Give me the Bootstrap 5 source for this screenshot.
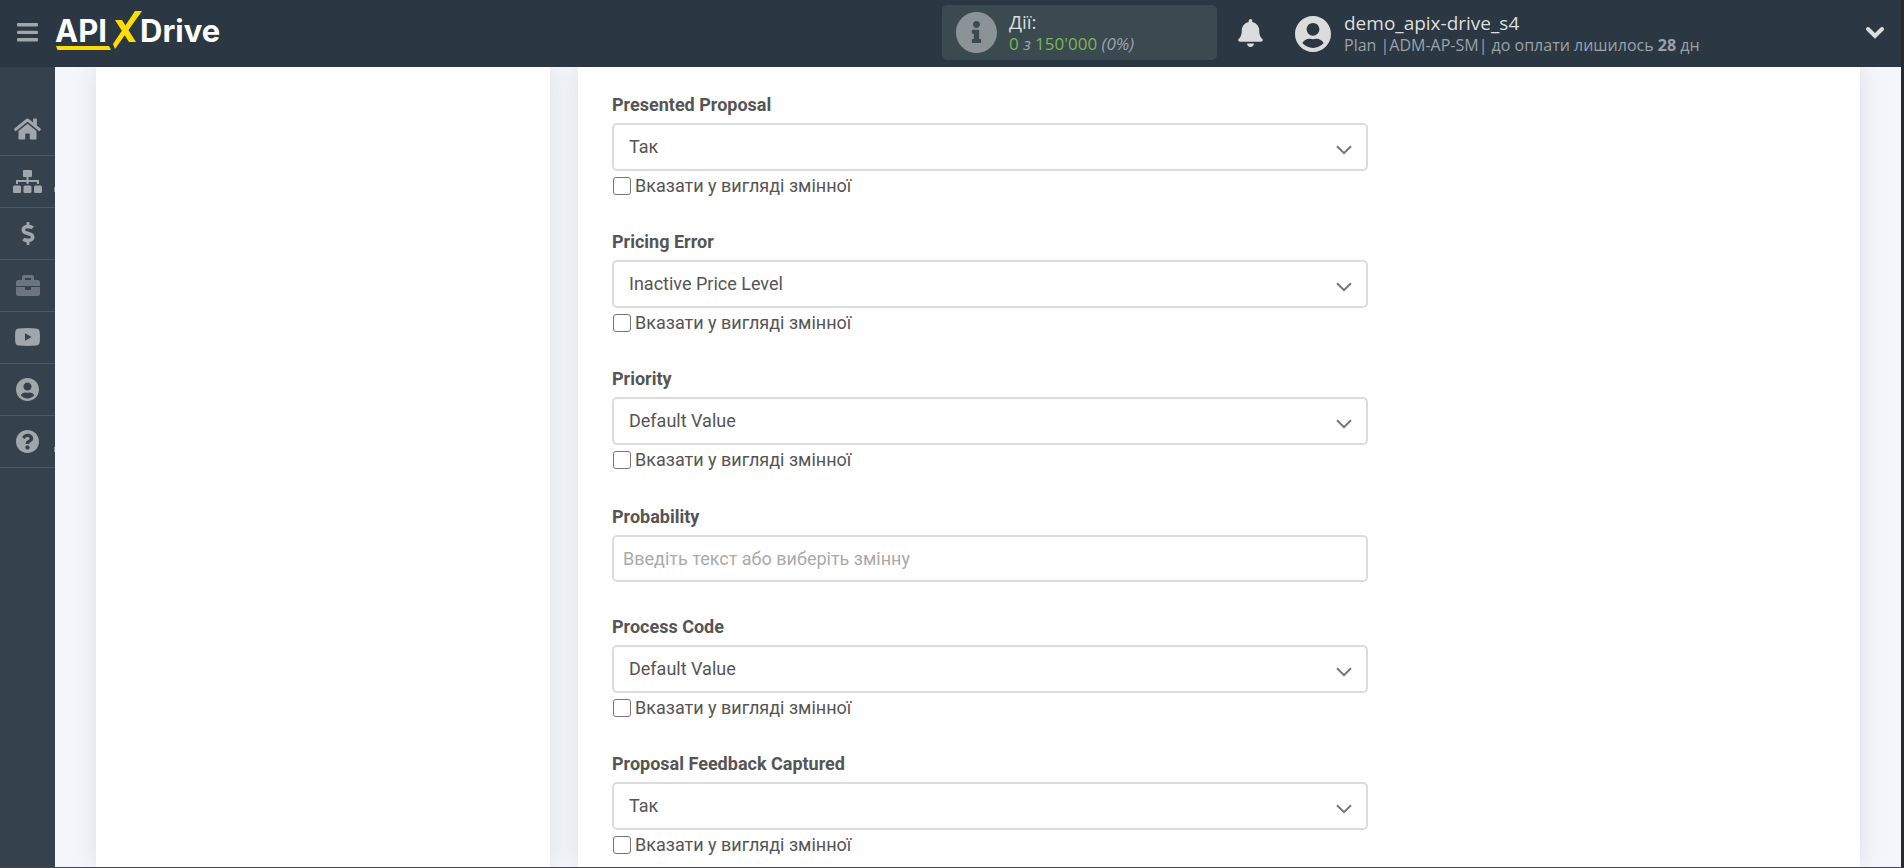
<!DOCTYPE html>
<html lang="uk">
<head>
<meta charset="utf-8">
<meta name="viewport" content="width=device-width, initial-scale=1">
<title>ApiX-Drive</title>
<link href="https://cdn.jsdelivr.net/npm/bootstrap@5.3.0/dist/css/bootstrap.min.css" rel="stylesheet">
<style>
  body { font-family: Roboto, "Noto Sans", sans-serif; font-size: 18px; line-height: 24px; color: #555; background: #f3f7fc; }
  .app-frame { border-right: 3px solid #272a2d; border-bottom: 1px solid #444; }
  .topbar { height: 67px; padding-bottom: 2px; background: #2b3742; font-family: "Open Sans", "Noto Sans", sans-serif; z-index: 2; }
  .icon-btn { background: none; border: 0; padding: 0; line-height: 0; }
  .burger { width: 55px; color: #a1a6ab; }
  .logo { color: #fff; text-decoration: none; }
  .logo text { font: 700 31px Inter, sans-serif; fill: #fff; }
  .actions-box { width: 275px; height: 55px; background: #3b4950; border-radius: 5px; padding-left: 14px; gap: 12px; color: #8b9397; }
  .line-a { font-size: 19px; line-height: 22px; color: #dedede; }
  .line-b { font-size: 17px; line-height: 22px; color: #9ba2a8; }
  .green { color: #7cb651; }
  .light-icon { color: #dcdcdc; }
  .bell-btn { margin-left: 21px; margin-right: 32px; }
  .user-box { width: 570px; gap: 13px; padding-top: 2px; text-decoration: none; }
  .user-box .line-b { font-size: 16px; }
  .sidebar { width: 55px; background: #36414e; padding-top: 37px; flex: none; }
  .side-link { height: 52px; padding-bottom: 1px; border-bottom: 1px solid #4c5864; color: #a1a6ab; }
  .side-link.off { color: #6c7480; }
  .side-link.more::after { content: ""; position: absolute; right: 0; top: 31px; width: 1px; height: 5px; background: #88919a; }
  .content-row { padding: 0 41px; gap: 28px; }
  .panel { background: #fff; box-shadow: 0 0 24px rgba(0, 0, 0, .1); }
  .panel-side { flex: 0 0 454px; }
  .panel-main { padding: 26px 34px 0; }
  .fields { max-width: 756px; }
  .field + .field { margin-top: 30px; }
  .field + .field-text { margin-top: 31px; }
  .field-text + .field { margin-top: 33px; }
  .field-title { font-weight: 700; margin-bottom: 6px; display: block; }
  .field .form-control, .field .form-select { height: 48px; font-size: 18px; line-height: 24px; color: #555; border: 2px solid #dcdcdc; border-radius: 5px; background-color: #fff; }
  .field .form-select { padding: 10px 40px 10px 15px; background-size: 16px 10px; background-position: right 14px top 20px;
    background-image: url("data:image/svg+xml,%3Csvg xmlns='http://www.w3.org/2000/svg' viewBox='0 0 16 10'%3E%3Cpath d='M1 1.2l7 7 7-7' fill='none' stroke='%23777' stroke-width='2'/%3E%3C/svg%3E"); }
  .field .form-control { height: 47px; padding: 9px 9px 10px; }
  .field .form-control::placeholder { color: #aaa; }
  .check-row { height: 29px; padding-top: 1px; gap: 4px; }
  .check-row .form-check-input { width: 18px; height: 18px; margin: 0 0 0 1px; border: 1px solid #767676; border-radius: 3px; }
</style>
</head>
<body>
<div class="app-frame d-flex flex-column min-vh-100">
  <header class="topbar d-flex align-items-center">
    <button class="icon-btn burger d-flex justify-content-center" type="button" aria-label="Меню">
      <svg width="21" height="19" viewBox="0 0 21 19" fill="currentColor"><rect y="0" width="21" height="3.500" rx="1"/><rect y="7.700" width="21" height="3.300" rx="1"/><rect y="15" width="21" height="3.500" rx="1"/></svg>
    </button>
    <a class="logo" href="#" aria-label="APIXDrive">
      <svg class="d-block" width="170" height="44" viewBox="0 0 170 44">
        <text x="0" y="31">API</text>
        <text x="85" y="31">Drive</text>
        <path d="M1 35h53l2 4H2.500z" fill="#ffdc04"/>
        <path d="M60 9h7l14 22h-7z" fill="#ffdc04"/>
        <path d="M80 0h7L60 38l-2-5z" fill="#ffdc04"/>
      </svg>
    </a>
    <div class="actions-box ms-auto d-flex align-items-center">
      <svg width="41" height="41" viewBox="8 8 496 496" fill="currentColor"><path d="M256 8C119.043 8 8 119.083 8 256c0 136.997 111.043 248 248 248s248-111.003 248-248C504 119.083 392.957 8 256 8zm0 110c23.196 0 42 18.804 42 42s-18.804 42-42 42-42-18.804-42-42 18.804-42 42-42zm56 254c0 6.627-5.373 12-12 12h-88c-6.627 0-12-5.373-12-12v-24c0-6.627 5.373-12 12-12h12v-64h-12c-6.627 0-12-5.373-12-12v-24c0-6.627 5.373-12 12-12h64c6.627 0 12 5.373 12 12v100h12c6.627 0 12 5.373 12 12v24z"/></svg>
      <div>
        <div class="line-a">Дії:</div>
        <div class="line-b"><span class="green">0</span> <i>з</i> <span class="green">150'000</span> <i>(0%)</i></div>
      </div>
    </div>
    <button class="icon-btn light-icon bell-btn" type="button" aria-label="Сповіщення">
      <svg width="25" height="28" viewBox="0 0 448 512" fill="currentColor"><path d="M224 512c35.320 0 63.970-28.650 63.970-64H160.030c0 35.350 28.650 64 63.970 64zm215.390-149.710c-19.320-20.760-55.470-51.990-55.470-154.290 0-77.700-54.480-139.900-127.940-155.160V32c0-17.670-14.320-32-31.980-32s-31.980 14.330-31.980 32v20.840C118.560 68.100 64.080 130.300 64.080 208c0 102.300-36.150 133.530-55.470 154.290-6 6.450-8.660 14.160-8.610 21.710.11 16.400 12.980 32 32.100 32h383.800c19.120 0 32-15.600 32.100-32 .05-7.550-2.610-15.270-8.610-21.710z"/></svg>
    </button>
    <a class="user-box d-flex align-items-center" href="#">
      <svg class="light-icon" width="36" height="36" viewBox="0 8 496 496" fill="currentColor"><use href="#user-shape"/></svg>
      <div>
        <div class="line-a">demo_apix-drive_s4</div>
        <div class="line-b">Plan |ADM-AP-SM| до оплати лишилось <b>28</b> дн</div>
      </div>
    </a>
    <button class="icon-btn light-icon me-3" type="button" aria-label="Розгорнути">
      <svg width="20" height="13" viewBox="0 0 20 13"><path d="M3 3l7 7 7-7" fill="none" stroke="currentColor" stroke-width="4" stroke-linecap="round"/></svg>
    </button>
  </header>

  <div class="d-flex flex-grow-1">
    <nav class="sidebar" aria-label="Розділи">
      <a class="side-link d-flex align-items-center justify-content-center" href="#" aria-label="Головна">
        <svg width="27" height="24" viewBox="0 0 576 512" fill="currentColor"><path d="M280.370 148.260L96 300.110V464a16 16 0 0 0 16 16l112.060-.29a16 16 0 0 0 15.920-16V368a16 16 0 0 1 16-16h64a16 16 0 0 1 16 16v95.640a16 16 0 0 0 16 16.050L464 480a16 16 0 0 0 16-16V300L295.670 148.260a12.190 12.190 0 0 0-15.300 0zM571.600 251.470L488 182.560V44.050a12 12 0 0 0-12-12h-56a12 12 0 0 0-12 12v72.610L318.470 43a48 48 0 0 0-61 0L4.340 251.470a12 12 0 0 0-1.600 16.900l25.500 31A12 12 0 0 0 45.150 301l235.220-193.740a12.190 12.190 0 0 1 15.300 0L530.900 301a12 12 0 0 0 16.900-1.600l25.500-31a12 12 0 0 0-1.700-16.930z"/></svg>
      </a>
      <a class="side-link more position-relative d-flex align-items-center justify-content-center" href="#" aria-label="Зв'язки">
        <svg width="29" height="23" viewBox="0 0 29 23" fill="currentColor"><rect x="10" y="0" width="9" height="7" rx="1"/><rect x="0" y="15.500" width="8" height="7.500" rx="1.500"/><rect x="10.500" y="15.500" width="8" height="7.500" rx="1.500"/><rect x="21" y="15.500" width="8" height="7.500" rx="1.500"/><path d="M4 14v-3h21v3M14.500 7v7" fill="none" stroke="currentColor" stroke-width="2"/></svg>
      </a>
      <a class="side-link d-flex align-items-center justify-content-center" href="#" aria-label="Оплата">
        <svg width="14" height="23" viewBox="0 0 288 512" fill="currentColor"><path d="M209.200 233.400l-108-31.600C88.700 198.200 80 186.500 80 173.500c0-16.300 13.200-29.500 29.500-29.500h66.300c12.200 0 24.200 3.700 34.200 10.500 6.100 4.100 14.300 3.100 19.500-2l34.800-34c7.100-6.900 6.100-18.400-1.800-24.500C238 74.800 207.400 64.100 176 64V16c0-8.800-7.200-16-16-16h-32c-8.800 0-16 7.200-16 16v48h-2.500C45.800 64-5.400 118.700.5 183.600c4.200 46.100 39.400 83.600 83.800 96.600l102.500 30c12.500 3.700 21.200 15.300 21.200 28.300 0 16.300-13.200 29.500-29.500 29.500h-66.300C100 368 88 364.300 78 357.500c-6.100-4.100-14.300-3.100-19.500 2l-34.800 34c-7.100 6.900-6.100 18.400 1.800 24.500 24.500 19.200 55.100 29.900 86.500 30v48c0 8.800 7.200 16 16 16h32c8.800 0 16-7.200 16-16v-48.200c46.600-.9 90.300-28.600 105.700-72.700 21.500-61.600-14.600-124.800-72.500-141.700z"/></svg>
      </a>
      <a class="side-link off d-flex align-items-center justify-content-center" href="#" aria-label="Портфель">
        <svg width="24" height="21" viewBox="0 0 24 21" fill="currentColor"><path fill-rule="evenodd" d="M2.500 5H6V2.500Q6 0 8.500 0h7Q18 0 18 2.500V5h3.500Q24 5 24 7.500V11H0V7.500Q0 5 2.500 5zM9 3v2h6V3z"/><path d="M0 12h9v2q0 1 1 1h4q1 0 1-1v-2h9v6.500q0 2.500-2.500 2.500h-19Q0 21 0 18.500z"/></svg>
      </a>
      <a class="side-link d-flex align-items-center justify-content-center" href="#" aria-label="Відео">
        <svg width="25" height="18" viewBox="0 0 25 18" fill="currentColor"><path fill-rule="evenodd" d="M4 .5Q12.500-.5 21 .5q3.500.3 3.700 3.500.5 5 0 10-.2 3.200-3.700 3.500-8.500.8-17 0Q.5 17.200.3 14q-.5-5 0-10Q.5.800 4 .500zM10 5.300v7.400L16.500 9z"/></svg>
      </a>
      <a class="side-link d-flex align-items-center justify-content-center" href="#" aria-label="Профіль">
        <svg width="23" height="23" viewBox="0 8 496 496" fill="currentColor"><path id="user-shape" d="M248 8C111 8 0 119 0 256s111 248 248 248 248-111 248-248S385 8 248 8zm0 96c48.600 0 88 39.400 88 88s-39.400 88-88 88-88-39.400-88-88 39.400-88 88-88zm0 344c-58.700 0-111.300-26.600-146.500-68.200 18.800-35.400 55.600-59.800 98.500-59.800 2.400 0 4.800.4 7.100 1.100 13 4.200 26.600 6.900 40.900 6.900 14.300 0 28-2.700 40.900-6.900 2.300-.7 4.700-1.100 7.100-1.100 42.900 0 79.700 24.400 98.500 59.800C359.300 421.400 306.700 448 248 448z"/></svg>
      </a>
      <a class="side-link more position-relative d-flex align-items-center justify-content-center" href="#" aria-label="Довідка">
        <svg width="23" height="23" viewBox="8 8 496 496" fill="currentColor"><path d="M504 256c0 136.997-111.043 248-248 248S8 392.997 8 256C8 119.083 119.043 8 256 8s248 111.083 248 248zM262.655 90c-54.497 0-89.255 22.957-116.549 63.758-3.536 5.286-2.353 12.415 2.715 16.258l34.699 26.310c5.205 3.947 12.621 3.008 16.665-2.122 17.864-22.658 30.113-35.797 57.303-35.797 20.429 0 45.698 13.148 45.698 32.958 0 14.976-12.363 22.667-32.534 33.976C247.128 238.528 216 254.941 216 296v4c0 6.627 5.373 12 12 12h56c6.627 0 12-5.373 12-12v-1.333c0-28.462 83.186-29.647 83.186-106.667 0-58.002-60.165-102-116.531-102zM256 338c-25.365 0-46 20.635-46 46 0 25.364 20.635 46 46 46s46-20.636 46-46c0-25.365-20.635-46-46-46z"/></svg>
      </a>
    </nav>

    <main class="content-row d-flex flex-grow-1 overflow-hidden">
      <aside class="panel panel-side"></aside>
      <section class="panel panel-main flex-grow-1">
        <form class="fields">
          <div class="field">
            <label class="field-title" for="f1">Presented Proposal</label>
            <select class="form-select" id="f1"><option>Так</option></select>
            <div class="check-row d-flex align-items-center"><input class="form-check-input" type="checkbox" id="c1"><label for="c1">Вказати у вигляді змінної</label></div>
          </div>
          <div class="field">
            <label class="field-title" for="f2">Pricing Error</label>
            <select class="form-select" id="f2"><option>Inactive Price Level</option></select>
            <div class="check-row d-flex align-items-center"><input class="form-check-input" type="checkbox" id="c2"><label for="c2">Вказати у вигляді змінної</label></div>
          </div>
          <div class="field">
            <label class="field-title" for="f3">Priority</label>
            <select class="form-select" id="f3"><option>Default Value</option></select>
            <div class="check-row d-flex align-items-center"><input class="form-check-input" type="checkbox" id="c3"><label for="c3">Вказати у вигляді змінної</label></div>
          </div>
          <div class="field field-text">
            <label class="field-title" for="f4">Probability</label>
            <input class="form-control" type="text" id="f4" placeholder="Введіть текст або виберіть змінну">
          </div>
          <div class="field">
            <label class="field-title" for="f5">Process Code</label>
            <select class="form-select" id="f5"><option>Default Value</option></select>
            <div class="check-row d-flex align-items-center"><input class="form-check-input" type="checkbox" id="c5"><label for="c5">Вказати у вигляді змінної</label></div>
          </div>
          <div class="field">
            <label class="field-title" for="f6">Proposal Feedback Captured</label>
            <select class="form-select" id="f6"><option>Так</option></select>
            <div class="check-row d-flex align-items-center"><input class="form-check-input" type="checkbox" id="c6"><label for="c6">Вказати у вигляді змінної</label></div>
          </div>
        </form>
      </section>
    </main>
  </div>
</div>
<script src="https://cdn.jsdelivr.net/npm/bootstrap@5.3.0/dist/js/bootstrap.bundle.min.js"></script>
</body>
</html>
